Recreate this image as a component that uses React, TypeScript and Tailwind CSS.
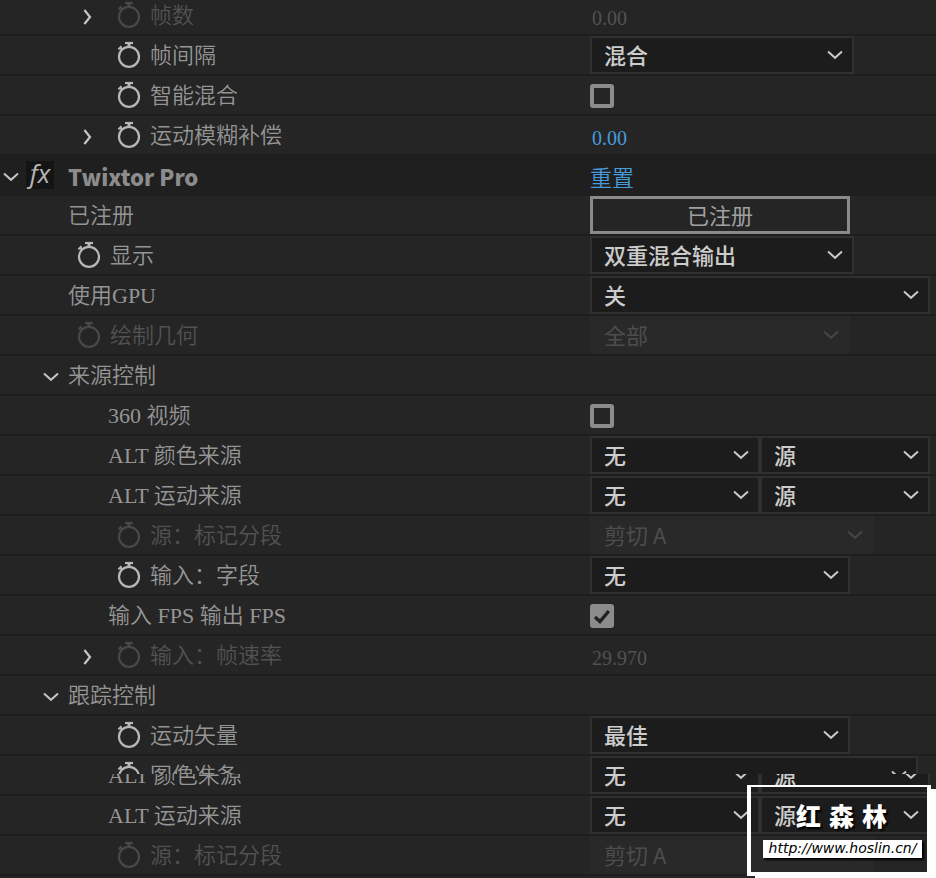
import { ReactNode, useId, useState } from "react";

interface IconProps {
    className?: string;
}

function ChevronDown({ className = "" }: IconProps) {
    return (
        <svg viewBox="0 0 16 10" className={`h-[10px] w-4 ${className}`} fill="none" stroke="currentColor" strokeWidth="2">
            <path d="M1 1.6 L8 7.8 L15 1.6" />
        </svg>
    )
}

function ChevronRight({ className = "" }: IconProps) {
    return (
        <svg viewBox="0 0 16 16" className={`size-4 ${className}`} fill="none" stroke="currentColor" strokeWidth="2.2">
            <path d="M1.4 1 L7 8 L1.4 15" />
        </svg>
    )
}

function Stopwatch() {
    return (
        <svg viewBox="0 0 24 28" className="h-7 w-6" fill="none" stroke="currentColor" strokeWidth="2.2">
            <circle cx="12" cy="15.8" r="10" />
            <path d="M8 2 H16" />
            <path d="M12 2 V6" strokeWidth="3" />
            <path d="M1.4 8.4 L4.6 5.2 M2.6 6.2 L5.4 9" strokeWidth="2" />
        </svg>
    )
}

interface DropdownProps {
    id?: string;
    label?: string;
    value: string;
    width: string;
    disabled?: boolean;
}

function Dropdown({ id, label, value, width, disabled }: DropdownProps) {
    return (
        <div className={`relative h-[38px] shrink-0 ${width}`}>
            <select
                id={id}
                aria-label={label}
                disabled={disabled}
                defaultValue={value}
                className={`h-full w-full appearance-none border-2 pr-8 pb-[2px] pl-3 text-[22px] leading-8 opacity-100 outline-none ${disabled ? "border-[#292929] bg-[#292929] text-[#4d4d4d]" : "border-[#303030] bg-[#1c1c1c] font-medium text-[#cccccc]"}`}
            >
                <option>{value}</option>
            </select>
            <ChevronDown className={`pointer-events-none absolute top-[14px] right-[11px] ${disabled ? "text-[#454545]" : "text-[#c8c8c8]"}`} />
        </div>
    )
}

interface CheckProps {
    id: string;
    checked?: boolean;
}

function Check({ id, checked = false }: CheckProps) {
    const [on, setOn] = useState(checked)
    return (
        <span className="relative mt-[2px] block size-6">
            <input
                id={id}
                type="checkbox"
                checked={on}
                onChange={() => setOn(!on)}
                className="block size-6 appearance-none rounded-[3px] border-4 border-[#8c8c8c] checked:bg-[#8c8c8c]"
            />
            {on && (
                <svg viewBox="0 0 24 24" className="pointer-events-none absolute inset-0 size-6" fill="none" stroke="#222222" strokeWidth="3.4">
                    <path d="M5 13 L10 17.6 L18.8 7" />
                </svg>
            )}
        </span>
    )
}

interface NumberValueProps {
    id: string;
    value: string;
    disabled?: boolean;
}

function NumberValue({ id, value, disabled }: NumberValueProps) {
    return (
        <input
            id={id}
            type="text"
            defaultValue={value}
            disabled={disabled}
            className={`mt-[6px] w-28 bg-transparent pl-[2px] font-['Liberation_Serif',serif] text-[20px] leading-6 outline-none ${disabled ? "text-[#525252]" : "text-[#459bdc]"}`}
        />
    )
}

interface RowProps {
    name: string;
    level?: 0 | 1;
    twirl?: "right" | "down";
    watch?: boolean;
    disabled?: boolean;
    children?: (id: string) => ReactNode;
}

function Row({ name, level = 0, twirl, watch, disabled, children }: RowProps) {
    const id = useId()
    const tone = disabled ? "text-[#525252]" : "text-[#959595]"
    const text = `pt-[2px] font-['Liberation_Serif','Noto_Sans_CJK_SC',serif] text-[22px] leading-8 font-[350] whitespace-nowrap ${tone}`
    return (
        <div className="grid h-10 grid-cols-[590px_1fr] border-b-2 border-[#1e1e1e] bg-[#252525]">
            <div className="flex items-center">
                <div className={`flex shrink-0 justify-end pr-[9px] text-[#c4c4c4] ${level === 1 ? "w-[108px]" : "w-[68px]"}`}>
                    {twirl && (
                        <button type="button" aria-label={name}>
                            {twirl === "right" ? <ChevronRight className="mt-1 block" /> : <ChevronDown className="mt-1 block" />}
                        </button>
                    )}
                </div>
                {watch && (
                    <button type="button" aria-label={`${name} 秒表`} className={`mr-[9px] ml-[9px] ${disabled ? "text-[#484848]" : "text-[#b8b8b8]"}`}>
                        <Stopwatch />
                    </button>
                )}
                {children ? <label htmlFor={id} className={text}>{name}</label> : <span className={text}>{name}</span>}
            </div>
            <div className="flex items-center">{children && children(id)}</div>
        </div>
    )
}

function EffectHeader() {
    return (
        <div className="-mt-[2px] grid h-[42px] grid-cols-[590px_1fr] bg-[#1f1f1f]">
            <div className="flex items-center">
                <button type="button" aria-label="Twixtor Pro" className="mt-1 mr-[7px] ml-[3px] text-[#c4c4c4]">
                    <ChevronDown className="block" />
                </button>
                <button type="button" aria-label="fx" className="mr-[14px] h-7 w-7 bg-[#141414] text-[#b4b4b4]">
                    <span className="block pb-1 font-['Open_Sans',sans-serif] text-[26px] leading-6 italic">fx</span>
                </button>
                <h2 className="pt-[2px] font-['Noto_Sans_CJK_SC',sans-serif] text-[22px] leading-8 font-black text-[#8c8c8c]">Twixtor Pro</h2>
            </div>
            <div className="flex items-center">
                <button type="button" className="mt-2 font-['Liberation_Serif','Noto_Sans_CJK_SC',serif] text-[22px] leading-8 font-[350] text-[#459bdc]">重置</button>
            </div>
        </div>
    )
}

function Watermark() {
    return (
        <div className="absolute right-[5px] bottom-[2px] h-[91px] w-[184px] border-4 border-t-2 border-white pt-[10px] shadow-[8px_4px_0_#ffffff]">
            <p className="flex gap-2 pl-[45px] text-[25px] leading-9 font-black text-white [text-shadow:2px_2px_2px_#000000]">
                <span>红</span>
                <span>森</span>
                <span>林</span>
            </p>
            <a href="http://www.hoslin.cn/" className="mt-[7px] mr-[5px] ml-3 block h-[18px] bg-white text-center font-['DejaVu_Sans',sans-serif] text-[14px] leading-[17px] whitespace-nowrap text-black italic shadow-[2px_2px_2px_#000000]">
                http://www.hoslin.cn/
            </a>
        </div>
    )
}

function SourcePair({ id }: { id: string }) {
    return (
        <>
            <Dropdown id={id} value="无" width="w-[170px]" />
            <Dropdown label="源" value="源" width="w-[170px]" />
        </>
    )
}

export default function App() {
    return (
        <main className="relative min-h-screen overflow-hidden bg-[#252525] font-['Noto_Sans_CJK_SC',sans-serif]">
            <div className="-mt-1">
                <Row name="帧数" level={1} twirl="right" watch disabled>
                    {(id) => <NumberValue id={id} value="0.00" disabled />}
                </Row>
                <Row name="帧间隔" level={1} watch>
                    {(id) => <Dropdown id={id} value="混合" width="w-[264px]" />}
                </Row>
                <Row name="智能混合" level={1} watch>
                    {(id) => <Check id={id} />}
                </Row>
                <Row name="运动模糊补偿" level={1} twirl="right" watch>
                    {(id) => <NumberValue id={id} value="0.00" />}
                </Row>

                <EffectHeader />

                <Row name="已注册">
                    {(id) => (
                        <button id={id} type="button" className="h-[38px] w-[260px] border-[3px] border-[#8a8a8a] pb-[2px] text-[22px] leading-[30px] text-[#a0a0a0]">
                            已注册
                        </button>
                    )}
                </Row>
                <Row name="显示" watch>
                    {(id) => <Dropdown id={id} value="双重混合输出" width="w-[264px]" />}
                </Row>
                <Row name="使用GPU">
                    {(id) => <Dropdown id={id} value="关" width="w-[340px]" />}
                </Row>
                <Row name="绘制几何" watch disabled>
                    {(id) => <Dropdown id={id} value="全部" width="w-[260px]" disabled />}
                </Row>

                <Row name="来源控制" twirl="down" />
                <Row name="360 视频" level={1}>
                    {(id) => <Check id={id} />}
                </Row>
                <Row name="ALT 颜色来源" level={1}>
                    {(id) => <SourcePair id={id} />}
                </Row>
                <Row name="ALT 运动来源" level={1}>
                    {(id) => <SourcePair id={id} />}
                </Row>
                <Row name="源：标记分段" level={1} watch disabled>
                    {(id) => <Dropdown id={id} value="剪切 A" width="w-[284px]" disabled />}
                </Row>
                <Row name="输入：字段" level={1} watch>
                    {(id) => <Dropdown id={id} value="无" width="w-[260px]" />}
                </Row>
                <Row name="输入 FPS 输出 FPS" level={1}>
                    {(id) => <Check id={id} checked />}
                </Row>
                <Row name="输入：帧速率" level={1} twirl="right" watch disabled>
                    {(id) => <NumberValue id={id} value="29.970" disabled />}
                </Row>

                <Row name="跟踪控制" twirl="down" />
                <Row name="运动矢量" level={1} watch>
                    {(id) => <Dropdown id={id} value="最佳" width="w-[260px]" />}
                </Row>
                {/* two scroll positions meet inside this row */}
                <div className="relative">
                    <Row name="ALT 颜色来源" level={1}>
                        {(id) => <SourcePair id={id} />}
                    </Row>
                    <div className="absolute inset-x-0 top-0 h-[18px] overflow-hidden">
                        <Row name="图像准备" level={1} watch>
                            {(id) => <Dropdown id={id} value="无" width="w-[328px]" />}
                        </Row>
                    </div>
                </div>
                <Row name="ALT 运动来源" level={1}>
                    {(id) => <SourcePair id={id} />}
                </Row>
                <Row name="源：标记分段" level={1} watch disabled>
                    {(id) => <Dropdown id={id} value="剪切 A" width="w-[284px]" disabled />}
                </Row>
            </div>
            <Watermark />
        </main>
    )
}
